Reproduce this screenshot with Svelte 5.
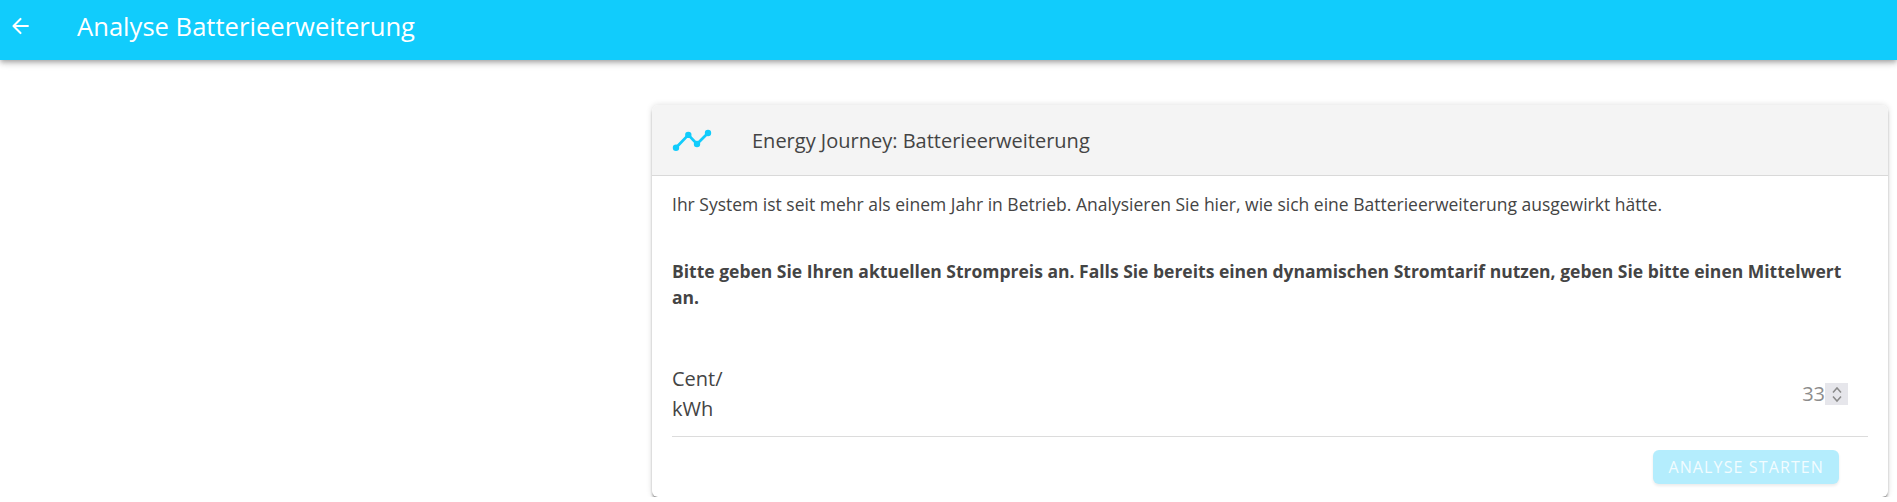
<script>
  let price = $state(33);
</script>

<header class="toolbar">
  <button class="back" aria-label="Zurück">
    <svg viewBox="0 0 512 512" width="24" height="24" fill="none" stroke="currentColor" stroke-width="44" stroke-linecap="round" stroke-linejoin="round">
      <path d="M267 406 L117 256 L267 106" />
      <path d="M130 256 H425" />
    </svg>
  </button>
  <h1 class="title">Analyse Batterieerweiterung</h1>
</header>

<main class="content">
  <section class="card">
    <div class="card-header">
      <svg class="journey-icon" viewBox="0 0 40 24" width="40" height="24" fill="#11ccfc" stroke="#11ccfc">
        <path d="M4 19.7 L16.3 6.9 L25 16 L36 5" fill="none" stroke-width="2.8" />
        <circle cx="4" cy="19.7" r="3.2" stroke="none" />
        <circle cx="16.3" cy="6.9" r="3.2" stroke="none" />
        <circle cx="25" cy="16" r="3.2" stroke="none" />
        <circle cx="36" cy="5" r="3.2" stroke="none" />
      </svg>
      <h2 class="card-title">Energy Journey: Batterieerweiterung</h2>
    </div>

    <div class="card-body">
      <p class="intro">Ihr System ist seit mehr als einem Jahr in Betrieb. Analysieren Sie hier, wie sich eine Batterieerweiterung ausgewirkt hätte.</p>
      <p class="hint">Bitte geben Sie Ihren aktuellen Strompreis an. Falls Sie bereits einen dynamischen Stromtarif nutzen, geben Sie bitte einen Mittelwert an.</p>

      <div class="price-row">
        <label class="price-label" for="price">Cent/<br />kWh</label>
        <div class="price-field">
          <input id="price" class="price-input" type="number" bind:value={price} />
          <div class="stepper">
            <button class="step" aria-label="Erhöhen" onclick={() => price++}>
              <svg viewBox="0 0 12 8" width="12" height="8" fill="none" stroke="currentColor" stroke-width="1.5"><path d="M2 6.5 L6 2 L10 6.5" /></svg>
            </button>
            <button class="step" aria-label="Verringern" onclick={() => price--}>
              <svg viewBox="0 0 12 8" width="12" height="8" fill="none" stroke="currentColor" stroke-width="1.5"><path d="M2 1.5 L6 6 L10 1.5" /></svg>
            </button>
          </div>
        </div>
      </div>

      <div class="actions">
        <button class="start" disabled>Analyse starten</button>
      </div>
    </div>
  </section>
</main>

<style>
  :global(body) {
    background: #fff;
    color: #444;
    font-family: "Open Sans", sans-serif;
    overflow: hidden;
  }

  .toolbar {
    box-sizing: border-box;
    display: flex;
    align-items: center;
    height: 60px;
    padding-bottom: 8px;
    background: #11ccfc;
    color: #fff;
    box-shadow: 0 2px 4px -1px rgba(0, 0, 0, 0.2), 0 4px 5px 0 rgba(0, 0, 0, 0.14), 0 1px 10px 0 rgba(0, 0, 0, 0.12);
  }

  .back {
    display: flex;
    align-items: center;
    justify-content: center;
    width: 40px;
    height: 40px;
    padding: 0;
    border: 0;
    background: none;
    color: inherit;
  }

  .title {
    margin: 0 0 0 37px;
    font-size: 25.6px;
    font-weight: 400;
  }

  .content {
    display: flex;
    justify-content: flex-end;
    padding: 45px 9px 0 0;
  }

  .card {
    width: 1236px;
    border-radius: 6px;
    background: #fff;
    overflow: hidden;
    box-shadow: 0 3px 3px -1px rgba(0, 0, 0, 0.55), 0 0 6px rgba(0, 0, 0, 0.14);
  }

  .card-header {
    box-sizing: border-box;
    display: flex;
    align-items: center;
    height: 71px;
    padding-left: 20px;
    background: #f4f4f4;
    border-bottom: 1px solid #d9d9d9;
  }

  .journey-icon {
    flex: none;
  }

  .card-title {
    margin: 0 0 0 40px;
    font-size: 20px;
    font-weight: 400;
  }

  .card-body {
    padding: 15px 20px 13px;
    font-size: 17.5px;
    line-height: 26px;
  }

  .intro {
    margin: 0;
  }

  .hint {
    margin: 41px 0 0;
    font-weight: 700;
  }

  .price-row {
    display: flex;
    align-items: center;
    justify-content: space-between;
    margin-top: 54px;
    padding-bottom: 12px;
    border-bottom: 1px solid #dcdcdc;
    font-size: 20px;
    line-height: 30px;
  }

  .price-field {
    display: flex;
    align-items: center;
    margin-right: 20px;
  }

  .price-input {
    width: 80px;
    padding: 0;
    border: 0;
    outline: 0;
    text-align: right;
    font: inherit;
    color: #8c8c8c;
    appearance: textfield;
  }

  .price-input::-webkit-inner-spin-button {
    appearance: none;
  }

  .stepper {
    display: flex;
    flex-direction: column;
    justify-content: center;
    width: 23px;
    height: 22px;
    background: #e6e6eb;
  }

  .step {
    display: flex;
    align-items: center;
    justify-content: center;
    height: 9px;
    padding: 0;
    border: 0;
    background: none;
    color: #8a8a8a;
  }

  .actions {
    display: flex;
    justify-content: flex-end;
    padding: 13px 29px 0 0;
  }

  .start {
    height: 34px;
    padding: 0 15px;
    border: 0;
    border-radius: 6px;
    background: #b4edfd;
    color: #f2fcff;
    font-family: inherit;
    font-size: 16px;
    font-weight: 500;
    letter-spacing: 0.07em;
    text-transform: uppercase;
    box-shadow: 0 2px 3px rgba(0, 0, 0, 0.08);
  }
</style>
